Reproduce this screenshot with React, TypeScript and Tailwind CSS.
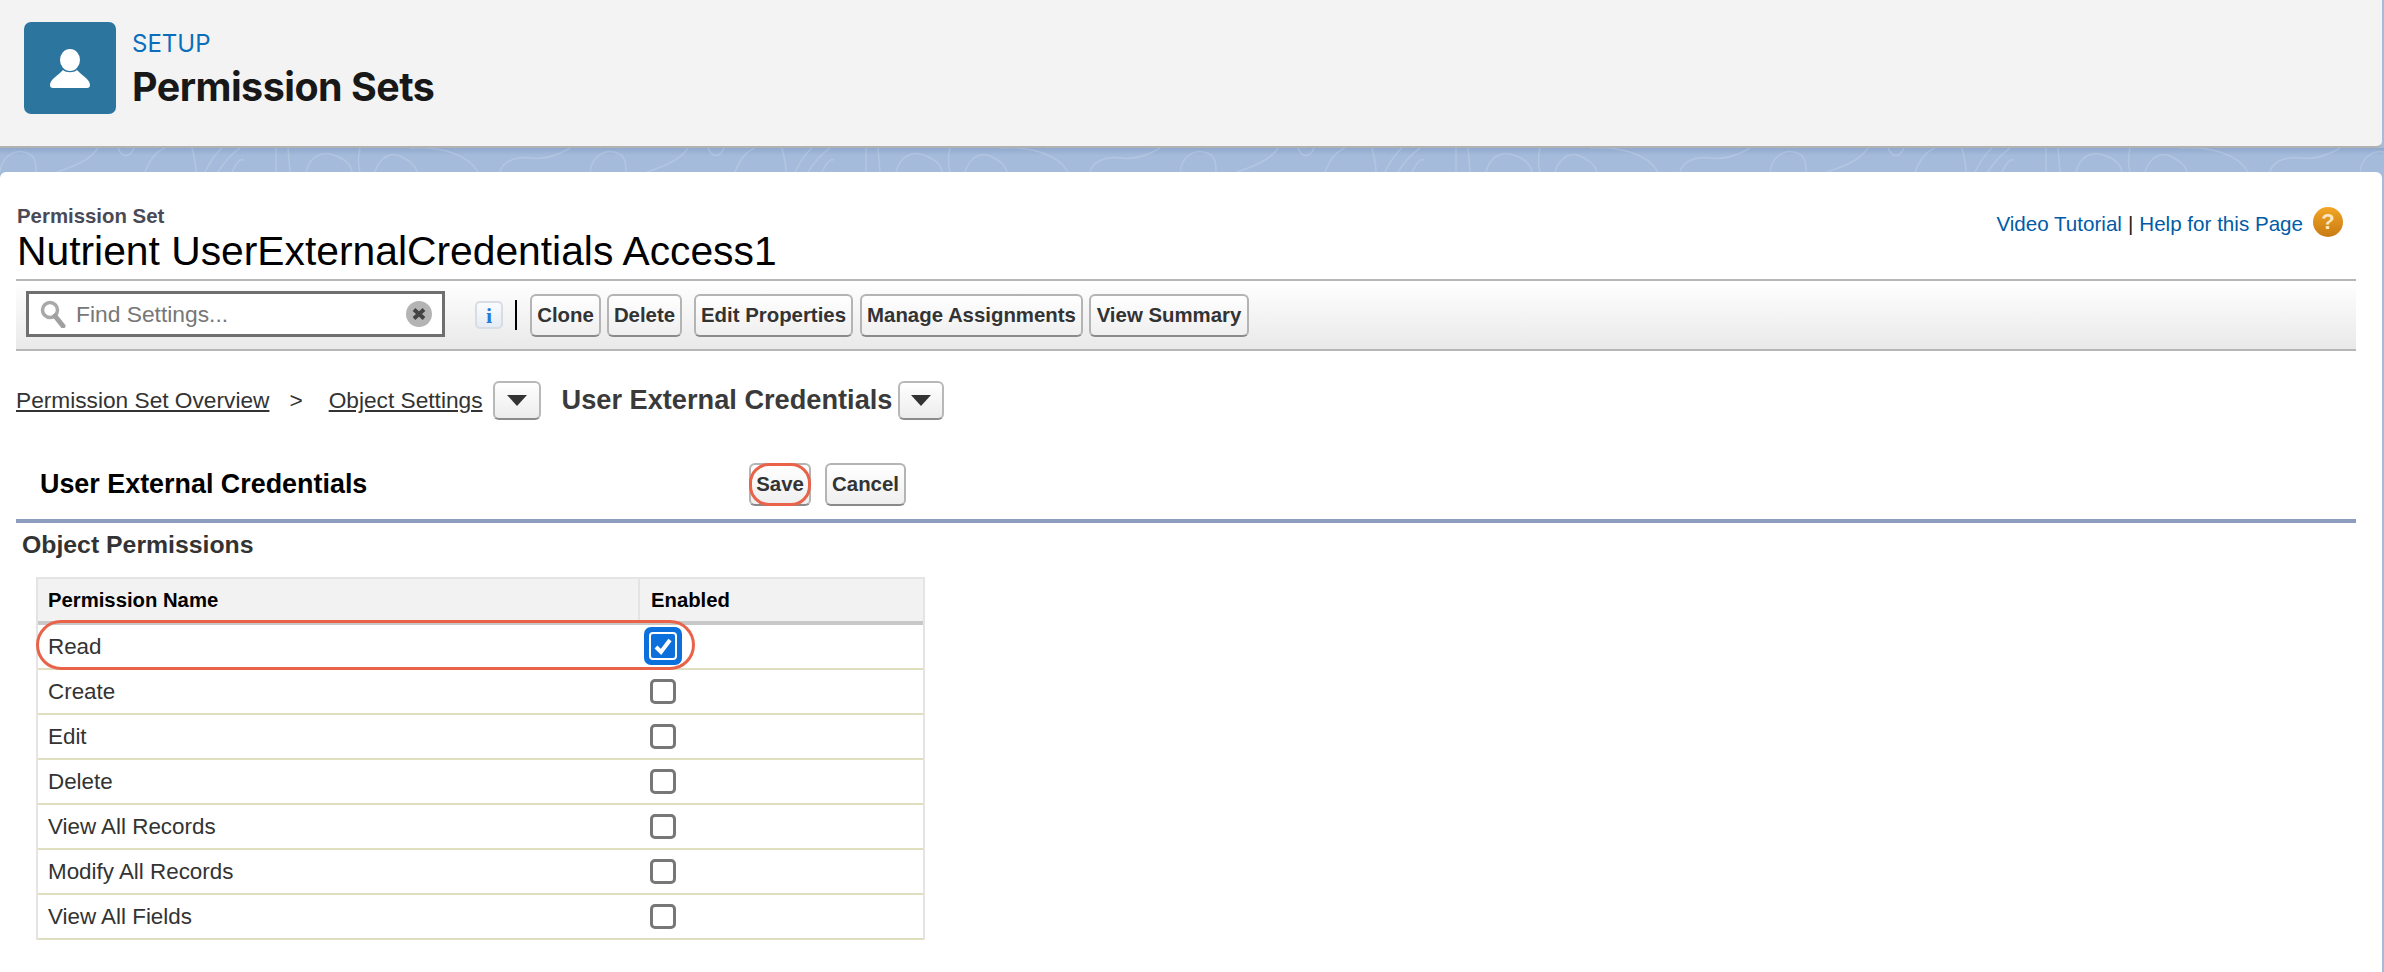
import React from 'react';

const toolbarButtons = [
  { label: 'Clone', width: 'w-[71px]', gap: 'ml-[13px]' },
  { label: 'Delete', width: 'w-[75px]', gap: 'ml-[6px]' },
  { label: 'Edit Properties', width: 'w-[159px]', gap: 'ml-[12px]' },
  { label: 'Manage Assignments', width: 'w-[223px]', gap: 'ml-[7px]' },
  { label: 'View Summary', width: 'w-[160px]', gap: 'ml-[6px]' },
];

const permissions = ['Read', 'Create', 'Edit', 'Delete', 'View All Records', 'Modify All Records', 'View All Fields'];

// one tile of the background pattern, repeats every 590px
const swirls = [
  'M0 24C2 8 14 2 24 4S36 12 36 24',
  'M57 24C75 18 90 12 98 0',
  'M118 0C122 10 130 10 134 0',
  'M145 24C150 12 155 4 165 0',
  'M192 0C194 8 196 16 196 24',
  'M205 24C210 14 215 6 222 0',
  'M218 24C224 14 232 6 240 0',
  'M232 24C236 16 240 10 244 12',
  'M276 0V24',
  'M288 0L290 24',
  'M306 24C310 8 322 4 330 6S350 12 352 24',
  'M360 0C358 8 358 16 360 24',
  'M375 24C380 8 392 4 400 8S415 16 417 24',
  'M410 0C440 -2 468 6 478 24',
  'M500 24C502 14 515 8 530 10S560 6 570 0',
];

const TriangleButton = ({ className }: { className: string }) => (
  <button className={`${className} flex h-[39px] items-center justify-center rounded-[6px] border-2 border-[#b8b8b8] border-b-[#8c8c8c] bg-gradient-to-b from-white to-[#ececec]`}>
    <svg width="20" height="11" viewBox="0 0 20 11">
      <polygon points="0,0 20,0 10,11" fill="#333" />
    </svg>
  </button>
);

const ToolButton = ({ label, className }: { label: string; className: string }) => (
  <button className={`${className} relative flex h-[43px] items-center justify-center rounded-[6px] border-2 border-[#b4b4b4] border-b-[#8a8a8a] bg-gradient-to-b from-white to-[#efefef] text-[20.4px] font-bold text-[#333]`}>
    {label}
  </button>
);

const App = () => {
  return (
    <div className="h-[972px] w-[2384px] overflow-hidden bg-[#a4bbdb] font-['Liberation_Sans',Arial,sans-serif]">
      <div className="flex h-[148px] w-[2382px] rounded-br-[6px] border-b-2 border-[#b2b2b2] bg-[#f3f3f3] pl-6 pt-[22px]">
        <div className="flex h-[92px] w-[92px] items-center justify-center rounded-[7px] bg-[#2b759f]">
          <svg width="40" height="39" viewBox="0 0 40 39">
            <ellipse cx="20" cy="11" rx="10" ry="11" fill="#fff" />
            <path d="M3 39H37Q40 39 40 36C40 30 32 27 27 21C24 24 16 24 13 21C8 27 0 30 0 36Q0 39 3 39Z" fill="#fff" />
          </svg>
        </div>
        <div className="ml-[16px] font-['Inter',sans-serif]">
          <div className="pt-[7px] text-[24px] leading-[30px] text-[#0a6ebd]">SETUP</div>
          <div className="mt-[4px] text-[39.4px] font-bold leading-[48px] tracking-[-0.5px] text-[#181818]">Permission Sets</div>
        </div>
      </div>

      <div className="relative h-[24px] bg-gradient-to-b from-[#8fa8cc] via-[#a4bbdb] via-30% to-[#a4bbdb]">
        <svg className="absolute inset-0 h-full w-full" fill="none">
          <defs>
            <pattern id="swirl" width="590" height="24" patternUnits="userSpaceOnUse">
              {swirls.map((d) => (
                <path key={d} d={d} stroke="#ffffff" strokeOpacity="0.16" strokeWidth="1.5" />
              ))}
            </pattern>
          </defs>
          <rect width="2384" height="24" fill="url(#swirl)" />
        </svg>
      </div>

      <div className="relative h-[800px] w-[2382px] rounded-t-[6px] bg-white">
        <div className="flex h-[107px] justify-between pl-[17px] pr-[39px] pt-[33px]">
          <div>
            <div className="h-[23px] text-[20.4px] font-bold leading-[23px] text-[#4a4a56]">Permission Set</div>
            <div className="h-[46px] text-[40.8px] leading-[46px] text-black">Nutrient UserExternalCredentials Access1</div>
          </div>
          <div className="flex h-[32px] items-start text-[20.6px]">
            <span className="mt-[4px] text-[#015ba7]">Video Tutorial</span>
            <span className="mx-[6px] mt-[4px] text-[#222]">|</span>
            <span className="mt-[4px] text-[#015ba7]">Help for this Page</span>
            <div className="ml-[10px] mt-[2px] flex h-[30px] w-[30px] items-center justify-center rounded-full bg-gradient-to-b from-[#f2a526] to-[#c87b12] text-[22px] font-bold leading-none text-[#fbe6c0]">?</div>
          </div>
        </div>

        <div className="ml-4 flex h-[72px] w-[2340px] items-center border-y-2 border-[#b6b6b6] bg-gradient-to-b from-white to-[#e9e9e9] pl-[10px]">
          <div className="-mt-[2px] flex h-[46px] w-[419px] items-center border-[3px] border-[#6f6f6f] bg-white pl-[11px] pr-[10px]">
            <svg width="26" height="28" viewBox="0 0 26 28" fill="none">
              <circle cx="10" cy="10" r="7.5" stroke="#a8a8a8" strokeWidth="3.5" />
              <path d="M15 16L23 26" stroke="#a0a0a0" strokeWidth="5" strokeLinecap="round" />
            </svg>
            <span className="ml-[10px] flex-1 text-[22.8px] text-[#777]">Find Settings...</span>
            <svg width="26" height="26" viewBox="0 0 26 26">
              <circle cx="13" cy="13" r="13" fill="#b4b4b4" />
              <path d="M8 8.5L18 17.5M18 8.5L8 17.5" stroke="#444" strokeWidth="4" />
            </svg>
          </div>
          <div className="ml-[30px] flex h-[28px] w-[28px] items-center justify-center rounded-[5px] border-2 border-[#d8dce3] bg-gradient-to-b from-[#fafcff] to-[#e6ecf4] font-['Liberation_Serif',serif] text-[22px] font-bold text-[#2a78d8]">i</div>
          <div className="ml-[12px] h-[30px] w-[2px] bg-black" />
          {toolbarButtons.map((b) => (
            <ToolButton key={b.label} label={b.label} className={`${b.width} ${b.gap}`} />
          ))}
        </div>

        <div className="ml-4 mt-[30px] flex h-[39px] items-center text-[22.7px] text-[#333]">
          <span className="underline">Permission Set Overview</span>
          <span className="ml-[20px]">&gt;</span>
          <span className="ml-[26px] underline">Object Settings</span>
          <TriangleButton className="ml-[10px] w-[48px]" />
          <span className="ml-[21px] text-[27.2px] font-bold text-[#3a3a3a]">User External Credentials</span>
          <TriangleButton className="ml-[6px] w-[46px]" />
        </div>

        <div className="ml-[40px] mt-[43px] flex h-[43px] items-center">
          <div className="w-[709px] text-[26.9px] font-bold text-black">User External Credentials</div>
          <div className="relative">
            <ToolButton label="Save" className="w-[62px]" />
            <div className="absolute inset-0 rounded-[20px] border-[3px] border-[#e8634a]" />
          </div>
          <ToolButton label="Cancel" className="ml-[14px] w-[81px]" />
        </div>

        <div className="ml-4 mt-[13px] h-[4px] w-[2340px] bg-[#8e9dbf]" />
        <div className="ml-[22px] mt-[8px] h-[28px] text-[24.8px] font-bold leading-[28px] text-[#333]">Object Permissions</div>

        <div className="ml-[36px] mt-[18px] w-[889px] border-x-2 border-[#e4e4e4]">
          <div className="flex h-[48px] border-t-2 border-b-4 border-t-[#e4e4e4] border-b-[#c8c8c8] bg-[#f2f2f2] text-[20.3px] font-bold text-black">
            <div className="flex w-[602px] items-center border-r-2 border-[#e4e4e4] pl-[10px]">Permission Name</div>
            <div className="flex items-center pl-[11px]">Enabled</div>
          </div>
          {permissions.map((name, i) => (
            <div key={name} className="relative flex h-[45px] items-center border-b-2 border-[#dfdfc0] text-[22.4px] text-[#333]">
              <div className="w-[604px] pl-[10px]">{name}</div>
              {i === 0 ? (
                <>
                  <div className="-mt-[2px] ml-[2px] flex h-[38px] w-[38px] items-center justify-center rounded-[7px] bg-[#0b6fdc]">
                    <div className="rounded-[4px] border-2 border-white bg-[#0b6fdc]">
                      <svg className="block" width="24" height="24" viewBox="0 0 24 24" fill="none">
                        <path d="M5 13L10 18L19 6" stroke="#fff" strokeWidth="4" />
                      </svg>
                    </div>
                  </div>
                  <div className="absolute -left-[2px] -top-[5px] h-[50px] w-[659px] rounded-[25px] border-[3px] border-[#e8634a]" />
                </>
              ) : (
                <div className="ml-[8px] h-[25px] w-[26px] rounded-[5px] border-[3px] border-[#777] bg-white" />
              )}
            </div>
          ))}
        </div>
      </div>
    </div>
  );
};

export default App;
